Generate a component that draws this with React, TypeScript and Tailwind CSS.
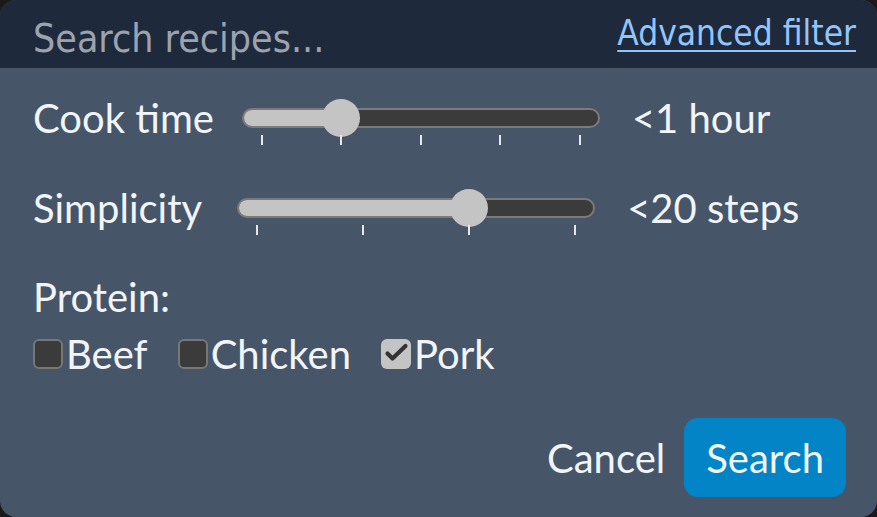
const body = { fontFamily: 'Lato, "Noto Sans", sans-serif' };
const head = { fontFamily: '"DejaVu Sans Condensed", "DejaVu Sans", sans-serif', fontStretch: 'condensed' as const };

function Slider({ pct, ticks }: { pct: number; ticks: number }) {
  const pos = `calc(17px + ${pct} * (100% - 34px))`;
  return (
    <div className="relative h-[20px] w-[358px] rounded-full border-2 border-[#7b7b7b] bg-[#3b3b3b]">
      <div className="absolute inset-y-0 left-0 rounded-l-full bg-[#c4c4c4]" style={{ width: pos }} />
      <div
        className="absolute top-1/2 h-[38px] w-[38px] -translate-x-1/2 -translate-y-1/2 rounded-full bg-[#c4c4c4]"
        style={{ left: pos }}
      />
      <div className="absolute inset-x-0 top-[25px] flex justify-between px-[17px]">
        {Array.from({ length: ticks }).map((_, i) => (
          <span key={i} className="h-[10px] w-[2px] bg-[#e5e7eb]" />
        ))}
      </div>
    </div>
  );
}

function Box({ label, checked }: { label: string; checked?: boolean }) {
  return (
    <label className="flex items-center">
      <span
        className={
          checked
            ? 'flex h-[30px] w-[30px] items-center justify-center rounded-[6px] bg-[#c4c4c4]'
            : 'h-[30px] w-[30px] rounded-[6px] border-2 border-[#777777] bg-[#3b3b3b]'
        }
      >
        {checked && (
          <svg viewBox="0 0 30 30" className="h-[30px] w-[30px]" fill="none">
            <path d="M6.5 14.5 L11.5 19.5 L24.5 7" stroke="#333333" strokeWidth="4.2" strokeLinecap="round" strokeLinejoin="round" />
          </svg>
        )}
      </span>
      <span className="ml-[3px]">{label}</span>
    </label>
  );
}

export default function App() {
  return (
    <div className="h-[517px] w-[877px] bg-[#1a1a1a]" style={body}>
      <div className="flex h-full flex-col overflow-hidden rounded-[16px] bg-[#475569] text-[40px] leading-[40px] text-[#f1f5f9]">
        <div className="flex h-[68px] items-start justify-between bg-[#1e293b] pl-[33px] pr-[21px]" style={head}>
          <span className="mt-[15px] text-[39px] leading-[48px] text-[#9ca3af]">Search recipes...</span>
          <a className="mt-[13px] text-[35px] leading-[40px] text-[#93c5fd] underline decoration-2 underline-offset-[5px]">
            Advanced filter
          </a>
        </div>
        <div className="flex flex-1 flex-col px-[33px]">
          <div className="mt-[30px] flex h-[40px] items-center">
            <span>Cook time</span>
            <div className="ml-[28px]"><Slider pct={0.25} ticks={5} /></div>
            <span className="ml-[32px]">&lt;1 hour</span>
          </div>
          <div className="mt-[50px] flex h-[40px] items-center">
            <span>Simplicity</span>
            <div className="ml-[35px]"><Slider pct={2 / 3} ticks={4} /></div>
            <span className="ml-[32px]">&lt;20 steps</span>
          </div>
          <div className="mt-[49px]">Protein:</div>
          <div className="mt-[17px] flex items-center gap-[30px]">
            <Box label="Beef" />
            <Box label="Chicken" />
            <Box label="Pork" checked />
          </div>
          <div className="mt-auto mb-[20px] mr-[-2px] flex items-center justify-end gap-[19px]">
            <button className="text-[#f1f5f9]">Cancel</button>
            <button className="h-[79px] rounded-[14px] bg-[#0284c7] px-[22px] text-[#f1f5f9]">Search</button>
          </div>
        </div>
      </div>
    </div>
  );
}
